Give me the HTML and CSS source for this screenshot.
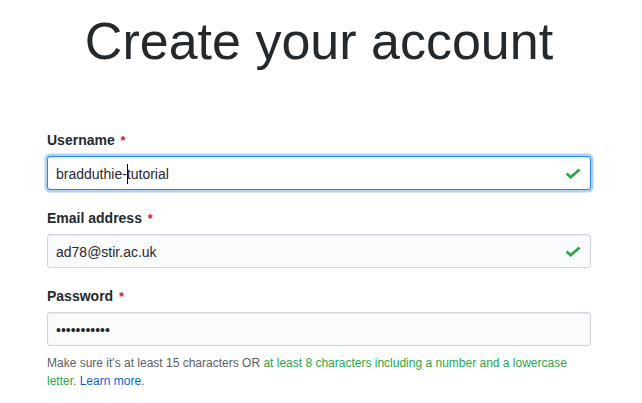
FILE: index.html
```html
<!DOCTYPE html>
<html lang="en">
<head>
<meta charset="utf-8">
<title>Create your account</title>
<link rel="stylesheet" href="styles.css">
</head>
<body>
<main class="signup">
  <h1 class="title">Create your account</h1>
  <form class="form">
    <div class="group">
      <label class="label">Username <span class="req">*</span></label>
      <div class="field is-focused">
        <span class="value">bradduthie-<span class="caret"></span>tutorial</span>
        <svg class="check" width="16" height="11" viewBox="0 0 16 11"><path d="M1.6 5.4 L5.6 9.2 L14.6 1.4" fill="none" stroke="#28a745" stroke-width="2.7"/></svg>
      </div>
    </div>
    <div class="group">
      <label class="label">Email address <span class="req">*</span></label>
      <div class="field">
        <span class="value">ad78@stir.ac.uk</span>
        <svg class="check" width="16" height="11" viewBox="0 0 16 11"><path d="M1.6 5.4 L5.6 9.2 L14.6 1.4" fill="none" stroke="#28a745" stroke-width="2.7"/></svg>
      </div>
    </div>
    <div class="group">
      <label class="label">Password <span class="req">*</span></label>
      <div class="field">
        <span class="value dots">•••••••••••</span>
      </div>
      <p class="note">Make sure it's at least 15 characters OR <span class="ok">at least 8 characters including a number and a lowercase</span> <span class="ok">letter</span>. <a class="link" href="#">Learn more</a>.</p>
    </div>
  </form>
</main>
</body>
</html>
```

FILE: styles.css
```css
* { box-sizing: border-box; }

html, body {
  margin: 0;
  padding: 0;
  background: #ffffff;
}

body {
  font-family: "Liberation Sans", Arial, sans-serif;
  color: #24292e;
}

.signup {
  width: 544px;
  margin-left: 47px;
}

.title {
  margin: 15px 0 0 0;
  font-size: 52px;
  line-height: 52px;
  font-weight: 400;
  text-align: center;
  color: #24292e;
}

.form {
  display: flex;
  flex-direction: column;
  gap: 18px;
  margin-top: 63px;
}

.group {
  display: flex;
  flex-direction: column;
}

.label {
  font-size: 14px;
  line-height: 21px;
  font-weight: 700;
  color: #24292e;
  margin-bottom: 5px;
}

.req {
  color: #cb2431;
  font-size: 13px;
  margin-left: 2px;
}

.field {
  height: 34px;
  display: flex;
  align-items: center;
  justify-content: space-between;
  padding: 1px 9px 0 8px;
  border: 1px solid #d1d5da;
  border-radius: 3px;
  background: #fafbfc;
  box-shadow: inset 0 1px 2px rgba(27, 31, 35, 0.075);
  font-size: 14px;
  line-height: 20px;
  color: #24292e;
}

.field.is-focused {
  background: #ffffff;
  border-color: #2188ff;
  box-shadow: inset 0 1px 2px rgba(27, 31, 35, 0.075), 0 0 0 2.5px rgba(3, 102, 214, 0.3);
}

.value {
  white-space: nowrap;
}

.caret {
  display: inline-block;
  width: 1px;
  height: 20px;
  background: #000000;
  vertical-align: -5px;
  margin-right: -1px;
}

.check {
  display: block;
  flex: none;
  margin-top: -1px;
}

.note {
  margin: 8px 0 0 0;
  font-size: 12px;
  line-height: 18px;
  color: #586069;
}

.ok {
  color: #28a745;
}

.link {
  color: #0366d6;
  text-decoration: none;
}
```
